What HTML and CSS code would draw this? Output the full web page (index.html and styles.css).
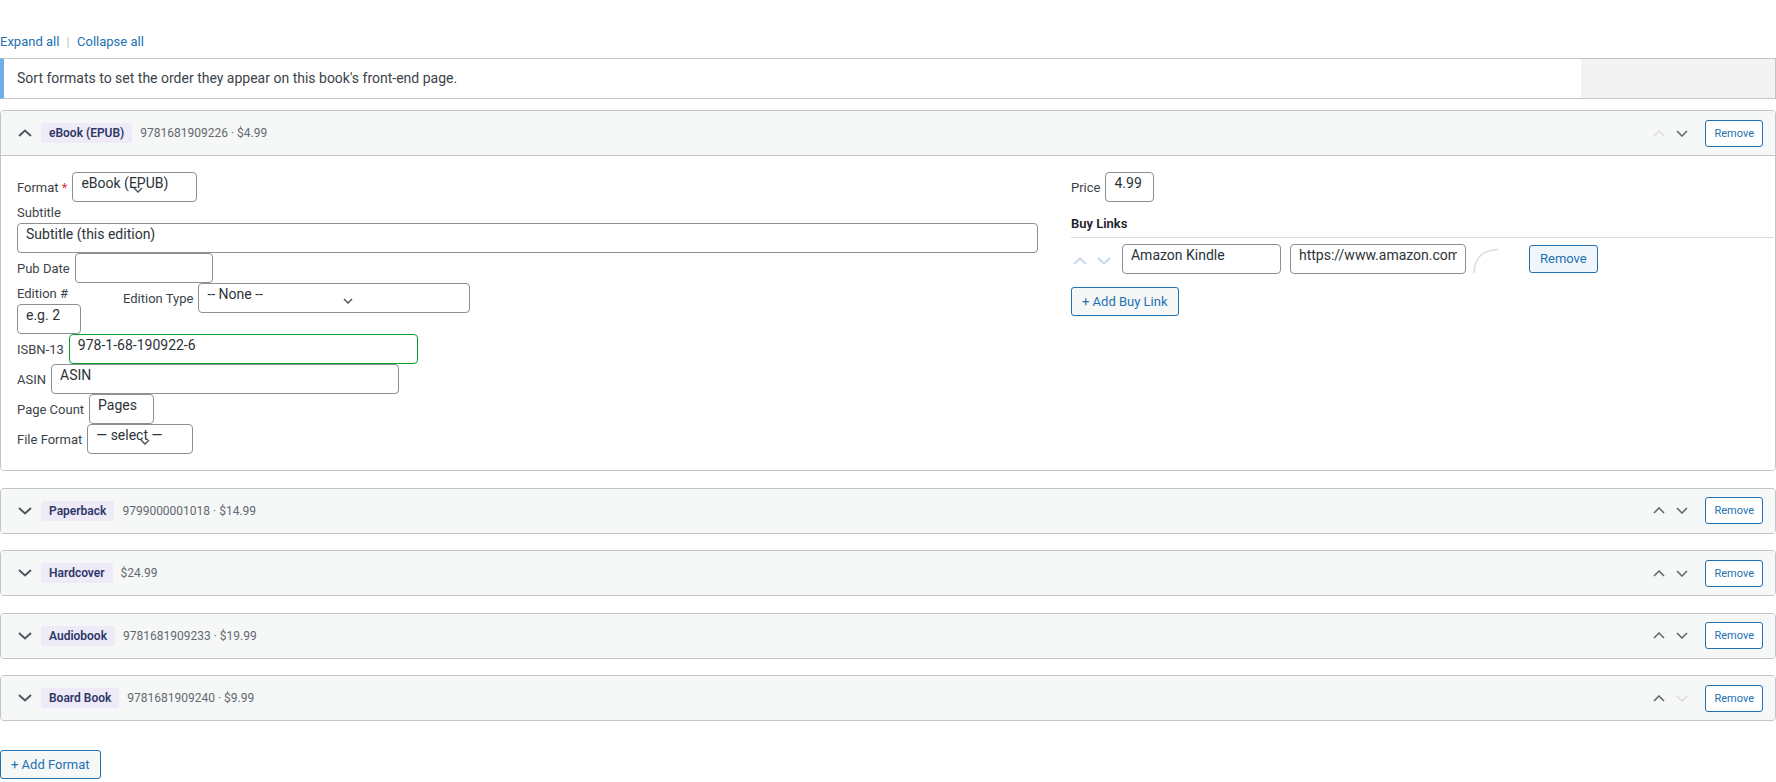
FILE: index.html
```html
<!DOCTYPE html>
<html lang="en">
<head>
    <meta charset="UTF-8">
    <meta name="viewport" content="width=device-width, initial-scale=1.0">
    <title>Book Formats</title>
    <link rel="stylesheet" href="styles.css">
</head>
<body>
    <div class="formats-panel">
        <div class="toggle-links">
            <a href="#">Expand all</a>
            <span class="sep">|</span>
            <a href="#">Collapse all</a>
        </div>

        <div class="notice">
            <p>Sort formats to set the order they appear on this book's front-end page.</p>
            <div class="notice-side"></div>
        </div>

        <div class="format-list">
            <div class="format open">
                <div class="format-head">
                    <button class="toggle" type="button">
                        <svg width="14" height="8" viewBox="0 0 14 8"><polyline points="1,7 7,1.5 13,7"/></svg>
                    </button>
                    <span class="badge">eBook (EPUB)</span>
                    <span class="meta">9781681909226 · $4.99</span>
                    <div class="head-actions">
                        <button class="move up disabled" type="button">
                            <svg width="12" height="7" viewBox="0 0 12 7"><polyline points="1,6 6,1 11,6"/></svg>
                        </button>
                        <button class="move down" type="button">
                            <svg width="12" height="7" viewBox="0 0 12 7"><polyline points="1,1 6,6 11,1"/></svg>
                        </button>
                        <button class="btn-remove" type="button">Remove</button>
                    </div>
                </div>

                <div class="format-body">
                    <div class="col-main">
                        <div class="field">
                            <label>Format <span class="req">*</span></label>
                            <span class="select-wrap">
                                <select class="w-format"><option>eBook (EPUB)</option></select>
                                <svg class="arrow arrow-format" width="10" height="6" viewBox="0 0 10 6"><polyline points="1,1 5,5 9,1"/></svg>
                            </span>
                        </div>

                        <label class="label-block">Subtitle</label>
                        <input type="text" class="w-full" placeholder="Subtitle (this edition)">

                        <div class="field">
                            <label>Pub Date</label>
                            <input type="text" class="w-date">
                        </div>

                        <div class="field-row">
                            <div class="edition-num">
                                <label class="label-block">Edition #</label>
                                <input type="text" class="w-num" placeholder="e.g. 2">
                            </div>
                            <div class="field">
                                <label>Edition Type</label>
                                <span class="select-wrap">
                                    <select class="w-type"><option>-- None --</option></select>
                                    <svg class="arrow arrow-type" width="10" height="6" viewBox="0 0 10 6"><polyline points="1,1 5,5 9,1"/></svg>
                                </span>
                            </div>
                        </div>

                        <div class="field">
                            <label>ISBN-13</label>
                            <input type="text" class="w-isbn valid" value="978-1-68-190922-6">
                        </div>

                        <div class="field">
                            <label>ASIN</label>
                            <input type="text" class="w-asin" placeholder="ASIN">
                        </div>

                        <div class="field">
                            <label>Page Count</label>
                            <input type="text" class="w-pages" placeholder="Pages">
                        </div>

                        <div class="field">
                            <label>File Format</label>
                            <span class="select-wrap">
                                <select class="w-file"><option>— select —</option></select>
                                <svg class="arrow arrow-file" width="10" height="6" viewBox="0 0 10 6"><polyline points="1,1 5,5 9,1"/></svg>
                            </span>
                        </div>
                    </div>

                    <div class="col-side">
                        <div class="field">
                            <label>Price</label>
                            <input type="text" class="w-price" value="4.99">
                        </div>

                        <h4 class="buy-title">Buy Links</h4>

                        <div class="buy-row">
                            <button class="move light first" type="button">
                                <svg width="14" height="8" viewBox="0 0 14 8"><polyline points="1,7 7,1.5 13,7"/></svg>
                            </button>
                            <button class="move light" type="button">
                                <svg width="14" height="8" viewBox="0 0 14 8"><polyline points="1,1 7,6.5 13,1"/></svg>
                            </button>
                            <input type="text" class="w-store" value="Amazon Kindle">
                            <input type="text" class="w-url" value="https://www.amazon.com/dp/B0CKLW8QY1">
                            <svg class="spinner" width="34" height="26" viewBox="0 0 34 26"><path d="M2 25 C2 11 10 2 26 1.5"/></svg>
                            <button class="btn-remove big" type="button">Remove</button>
                        </div>

                        <button class="btn-add" type="button">+ Add Buy Link</button>
                    </div>
                </div>
            </div>

            <div class="format">
                <div class="format-head">
                    <button class="toggle" type="button">
                        <svg width="14" height="8" viewBox="0 0 14 8"><polyline points="1,1 7,6.5 13,1"/></svg>
                    </button>
                    <span class="badge">Paperback</span>
                    <span class="meta">9799000001018 · $14.99</span>
                    <div class="head-actions">
                        <button class="move up" type="button">
                            <svg width="12" height="7" viewBox="0 0 12 7"><polyline points="1,6 6,1 11,6"/></svg>
                        </button>
                        <button class="move down" type="button">
                            <svg width="12" height="7" viewBox="0 0 12 7"><polyline points="1,1 6,6 11,1"/></svg>
                        </button>
                        <button class="btn-remove" type="button">Remove</button>
                    </div>
                </div>
            </div>

            <div class="format">
                <div class="format-head">
                    <button class="toggle" type="button">
                        <svg width="14" height="8" viewBox="0 0 14 8"><polyline points="1,1 7,6.5 13,1"/></svg>
                    </button>
                    <span class="badge">Hardcover</span>
                    <span class="meta">$24.99</span>
                    <div class="head-actions">
                        <button class="move up" type="button">
                            <svg width="12" height="7" viewBox="0 0 12 7"><polyline points="1,6 6,1 11,6"/></svg>
                        </button>
                        <button class="move down" type="button">
                            <svg width="12" height="7" viewBox="0 0 12 7"><polyline points="1,1 6,6 11,1"/></svg>
                        </button>
                        <button class="btn-remove" type="button">Remove</button>
                    </div>
                </div>
            </div>

            <div class="format">
                <div class="format-head">
                    <button class="toggle" type="button">
                        <svg width="14" height="8" viewBox="0 0 14 8"><polyline points="1,1 7,6.5 13,1"/></svg>
                    </button>
                    <span class="badge">Audiobook</span>
                    <span class="meta">9781681909233 · $19.99</span>
                    <div class="head-actions">
                        <button class="move up" type="button">
                            <svg width="12" height="7" viewBox="0 0 12 7"><polyline points="1,6 6,1 11,6"/></svg>
                        </button>
                        <button class="move down" type="button">
                            <svg width="12" height="7" viewBox="0 0 12 7"><polyline points="1,1 6,6 11,1"/></svg>
                        </button>
                        <button class="btn-remove" type="button">Remove</button>
                    </div>
                </div>
            </div>

            <div class="format">
                <div class="format-head">
                    <button class="toggle" type="button">
                        <svg width="14" height="8" viewBox="0 0 14 8"><polyline points="1,1 7,6.5 13,1"/></svg>
                    </button>
                    <span class="badge">Board Book</span>
                    <span class="meta">9781681909240 · $9.99</span>
                    <div class="head-actions">
                        <button class="move up" type="button">
                            <svg width="12" height="7" viewBox="0 0 12 7"><polyline points="1,6 6,1 11,6"/></svg>
                        </button>
                        <button class="move down disabled" type="button">
                            <svg width="12" height="7" viewBox="0 0 12 7"><polyline points="1,1 6,6 11,1"/></svg>
                        </button>
                        <button class="btn-remove" type="button">Remove</button>
                    </div>
                </div>
            </div>
        </div>

        <button class="btn-add add-format" type="button">+ Add Format</button>
    </div>
</body>
</html>
```

FILE: styles.css
```css
body {
    margin: 0;
    font-family: -apple-system, "Segoe UI", Roboto, sans-serif;
    font-size: 13px;
    color: #3c434a;
    background-color: #fff;
}
.formats-panel {
    padding-top: 33px;
}
.toggle-links {
    line-height: 18px;
    height: 18px;
    margin-bottom: 7px;
}
.toggle-links a {
    color: #2271b1;
    text-decoration: none;
}
.toggle-links .sep {
    color: #c3c4c7;
    margin: 0 4px;
}
.notice {
    display: flex;
    height: 39px;
    border: 1px solid #c3c4c7;
    border-left: 4px solid #72aee6;
    margin-bottom: 11px;
}
.notice p {
    flex: 1;
    margin: 0;
    padding-left: 13px;
    line-height: 39px;
    font-size: 14px;
    background-color: #fff;
    color: #3c434a;
}
.notice-side {
    width: 194px;
    background-color: #f3f3f4;
}
.format {
    border: 1px solid #c3c4c7;
    border-radius: 4px;
    margin-bottom: 16.5px;
    overflow: hidden;
}
.format-head {
    display: flex;
    align-items: center;
    height: 44px;
    padding: 0 12px 0 16px;
    background-color: #f6f7f7;
}
.format.open .format-head {
    border-bottom: 1px solid #c3c4c7;
}
button {
    font-family: inherit;
}
.toggle,
.move {
    display: flex;
    align-items: center;
    justify-content: center;
    border: none;
    background: none;
    padding: 0;
    cursor: pointer;
}
.toggle {
    width: 16px;
    height: 16px;
    margin-right: 8px;
}
.toggle svg polyline {
    fill: none;
    stroke: #50575e;
    stroke-width: 2;
}
.badge {
    display: inline-block;
    height: 20px;
    line-height: 20px;
    padding: 0 8px;
    border-radius: 3px;
    background-color: #efeaf7;
    color: #2c3868;
    font-size: 12px;
    font-weight: 600;
}
.meta {
    margin-left: 8px;
    color: #646970;
    font-size: 12px;
}
.head-actions {
    margin-left: auto;
    display: flex;
    align-items: center;
}
.head-actions .move {
    width: 12px;
    height: 16px;
}
.head-actions .move.up {
    margin-right: 11px;
}
.head-actions .move.down {
    margin-right: 17px;
}
.move svg polyline {
    fill: none;
    stroke: #646970;
    stroke-width: 1.6;
}
.move.disabled svg polyline {
    stroke: #dcdcde;
}
.btn-remove {
    height: 27px;
    padding: 0 8px;
    border: 1px solid #2271b1;
    border-radius: 3px;
    background-color: #fff;
    color: #2271b1;
    font-size: 11px;
    cursor: pointer;
}
.format-body {
    display: grid;
    grid-template-columns: minmax(0, 1.484fr) minmax(0, 1fr);
    column-gap: 33px;
    padding: 16px;
    background-color: #fff;
}
.field {
    display: flex;
    align-items: center;
    gap: 5px;
}
.field-row {
    display: flex;
    align-items: flex-start;
}
.label-block {
    display: block;
    line-height: 21px;
    height: 21px;
}
.req {
    color: #d63638;
}
input[type="text"],
select {
    box-sizing: border-box;
    height: 30px;
    padding: 1px 8px 9px 8px;
    border: 1px solid #8c8f94;
    border-radius: 4px;
    background-color: #fff;
    font-family: inherit;
    font-size: 14px;
    line-height: 18px;
    color: #2c3338;
    margin: 0;
}
input::placeholder {
    color: #2c3338;
    opacity: 1;
}
select {
    appearance: none;
    -webkit-appearance: none;
}
input.valid {
    border-color: #00a32a;
}
.select-wrap {
    position: relative;
    display: inline-block;
    height: 30px;
}
.select-wrap .arrow {
    position: absolute;
    top: 15px;
    pointer-events: none;
}
.arrow polyline {
    fill: none;
    stroke: #50575e;
    stroke-width: 1.5;
}
.arrow-format { left: 61px; }
.arrow-type { left: 145px; }
.arrow-file { left: 53px; top: 13px; }
.w-format { width: 125px; }
.w-full { display: block; width: 100%; }
.w-date { width: 138px; }
.w-num { width: 64px; }
.w-type { width: 272px; }
.w-isbn { width: 349px; }
.w-asin { width: 348px; }
.w-pages { width: 65px; }
.w-file { width: 106px; }
.w-price { width: 49px; }
.w-store { width: 159px; }
.w-url { width: 176px; }
.edition-num {
    width: 106px;
}
.buy-title {
    margin: 12px -15px 0 0;
    padding-bottom: 3px;
    line-height: 20px;
    font-size: 13px;
    font-weight: 600;
    color: #1d2327;
    border-bottom: 1px solid #dcdcde;
}
.buy-row {
    display: flex;
    align-items: center;
    margin-top: 6px;
    height: 29px;
}
.buy-row .move {
    width: 14px;
    height: 16px;
    margin-top: 4px;
    margin-right: 10px;
}
.buy-row .move.first {
    margin-left: 2px;
}
.buy-row .move + .move {
    margin-right: 11px;
}
.move.light svg polyline {
    stroke: #c5d9ed;
    stroke-width: 2;
}
.buy-row .w-url {
    margin-left: 9px;
}
.spinner {
    margin-left: 6px;
    margin-top: 4px;
}
.spinner path {
    fill: none;
    stroke: #dcdcde;
    stroke-width: 1.5;
}
.btn-remove.big {
    height: 28px;
    margin-left: 23px;
    padding: 0 10px;
    font-size: 13px;
    background-color: #f0f6fc;
}
.btn-add {
    display: block;
    height: 29px;
    margin-top: 14px;
    padding: 0 10px;
    border: 1px solid #2271b1;
    border-radius: 3px;
    background-color: #f6f7f7;
    color: #2271b1;
    font-size: 13px;
    cursor: pointer;
}
.add-format {
    margin-top: 29px;
}
```
